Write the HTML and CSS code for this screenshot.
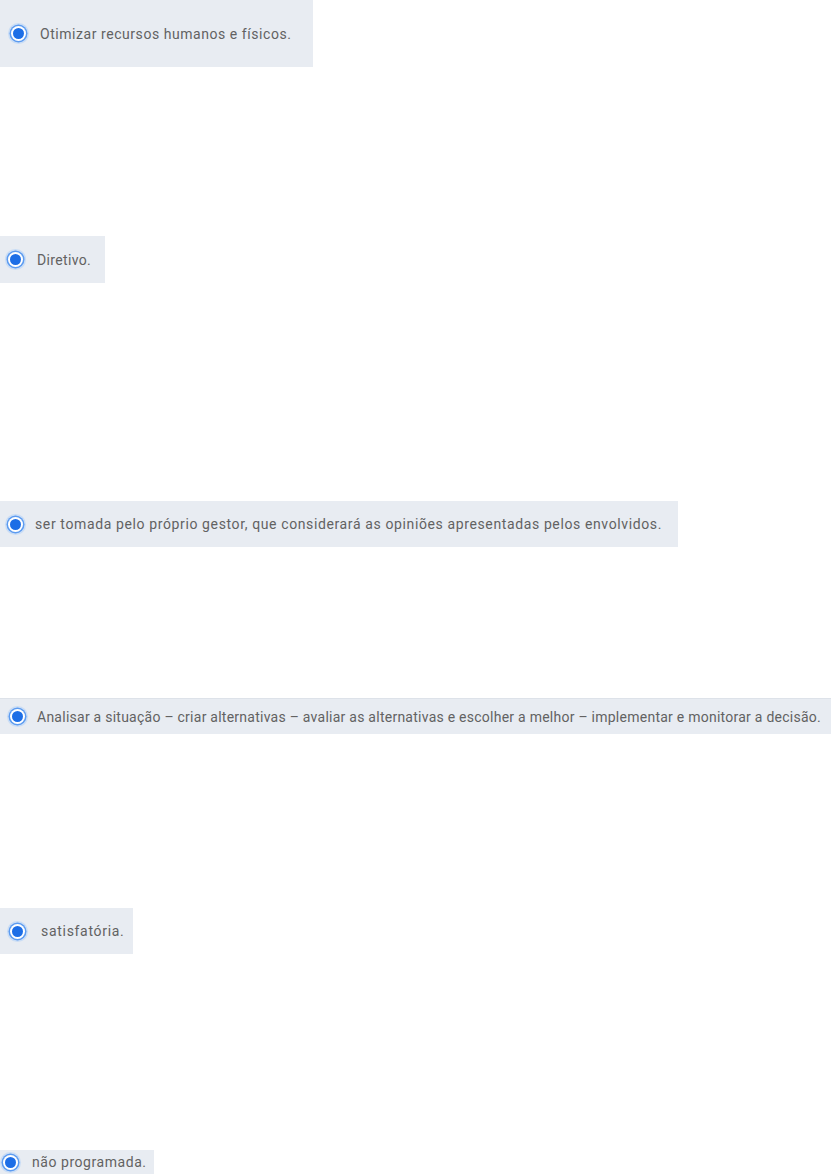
FILE: index.html
```html
<!DOCTYPE html>
<html lang="pt-BR">
<head>
<meta charset="utf-8">
<title>Respostas</title>
<link rel="stylesheet" href="styles.css">
</head>
<body>
<main class="answers">
  <div class="opt opt-1"><span class="radio"></span><span class="label">Otimizar recursos humanos e físicos.</span></div>
  <div class="opt opt-2"><span class="radio"></span><span class="label">Diretivo.</span></div>
  <div class="opt opt-3"><span class="radio"></span><span class="label">ser tomada pelo próprio gestor, que considerará as opiniões apresentadas pelos envolvidos.</span></div>
  <div class="opt opt-4"><span class="radio"></span><span class="label">Analisar a situação – criar alternativas – avaliar as alternativas e escolher a melhor – implementar e monitorar a decisão.</span></div>
  <div class="opt opt-5"><span class="radio"></span><span class="label">satisfatória.</span></div>
  <div class="opt opt-6"><span class="radio"></span><span class="label">não programada.</span></div>
</main>
</body>
</html>
```

FILE: styles.css
```css
html, body {
  margin: 0;
  padding: 0;
  background: #ffffff;
}
body {
  width: 831px;
  height: 1174px;
  overflow: hidden;
}
.answers {
  display: flex;
  flex-direction: column;
  align-items: flex-start;
}
.opt {
  display: flex;
  align-items: center;
  background: #e8ecf2;
  color: #626262;
  font-family: Roboto, "Liberation Sans", sans-serif;
  font-size: 14px;
  letter-spacing: 0.55px;
  white-space: nowrap;
  box-sizing: border-box;
}
.radio {
  flex: none;
  width: 11px;
  height: 11px;
  border-radius: 50%;
  background: #1d6ee6;
  box-shadow: 0 0 0 2px #ffffff, 0 0 0 3.5px #5c9bf0, 0 0 0 5px rgba(170, 205, 250, 0.5);
}
.opt-1 { width: 313px; height: 67px; padding-left: 13px; }
.opt-1 .label { margin-left: 16px; }
.opt-2 { width: 105px; height: 47px; margin-top: 169px; padding-left: 10px; letter-spacing: 0.35px; }
.opt-2 .label { margin-left: 16px; }
.opt-3 { width: 678px; height: 46px; margin-top: 218px; padding-left: 10px; letter-spacing: 0.62px; }
.opt-3 .label { margin-left: 14px; }
.opt-4 { width: 831px; height: 36px; margin-top: 151px; padding-left: 12px; border-top: 1px solid #dde2e9; letter-spacing: 0.25px; }
.opt-4 .label { margin-left: 14px; }
.opt-5 { width: 133px; height: 46px; margin-top: 174px; padding-left: 12px; letter-spacing: 0.7px; }
.opt-5 .label { margin-left: 18px; }
.opt-6 { width: 154px; height: 24px; margin-top: 196px; padding-left: 5px; }
.opt-6 .label { margin-left: 16px; }
```
